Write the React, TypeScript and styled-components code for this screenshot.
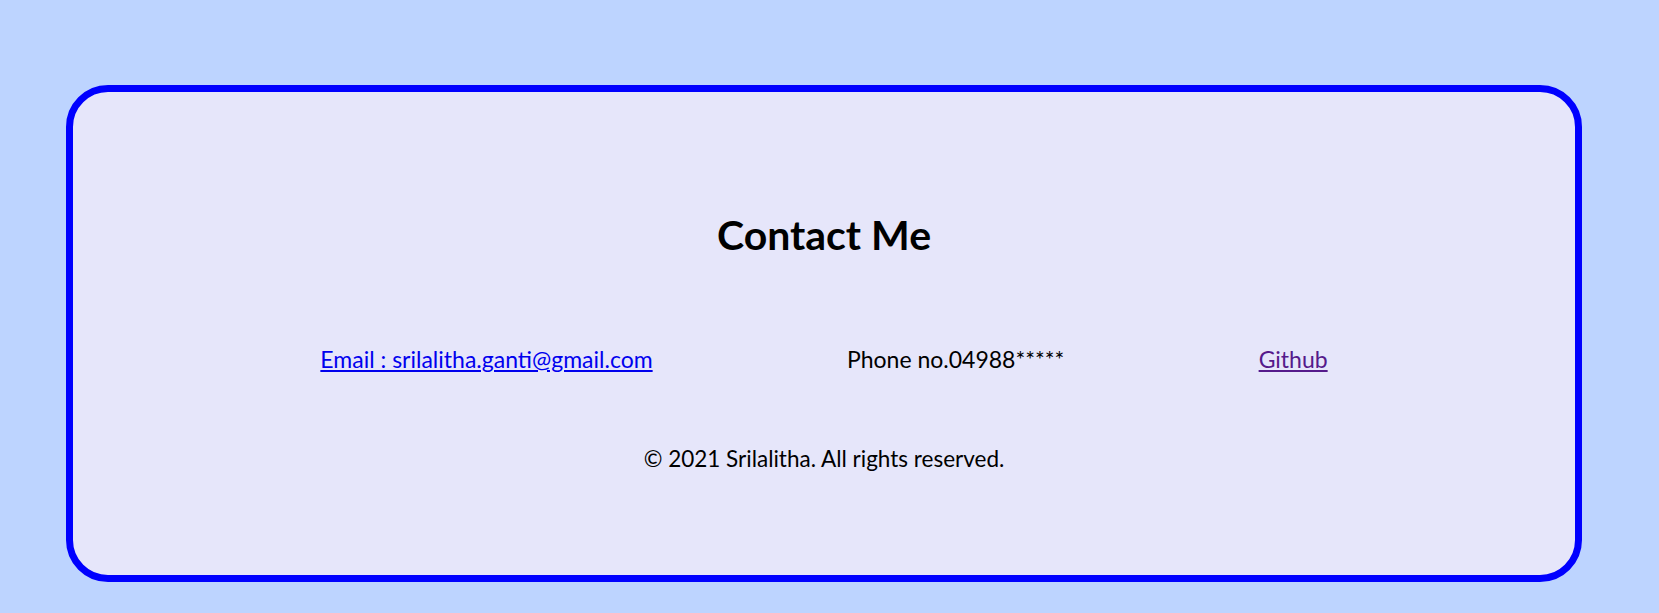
import React from "react";
import styled, { createGlobalStyle } from "styled-components";

const GlobalStyle = createGlobalStyle`
  html, body {
    margin: 0;
    padding: 0;
    background: #bdd4ff;
  }
  body {
    font-family: Lato, "Noto Sans", sans-serif;
    color: #000;
  }
`;

const Page = styled.div`
  padding: 85px 77px 32px 66px;
`;

const Card = styled.section`
  border: 7px solid #0000ff;
  border-radius: 42px;
  background: #e6e6fa;
  padding: 118px 0 104px;
  display: flex;
  flex-direction: column;
  align-items: center;
`;

const Heading = styled.h2`
  margin: 0;
  font-size: 41px;
  line-height: 1.2;
  font-weight: 700;
`;

const LinkRow = styled.div`
  width: 80%;
  margin-top: 87px;
  display: flex;
  justify-content: space-around;
  align-items: baseline;
  font-size: 23px;
  line-height: 1.15;
`;

const ContactLink = styled.a<{ $visited?: boolean }>`
  color: ${(p) => (p.$visited ? "#551a8b" : "#0000ee")};
  text-decoration: underline;
`;

const ContactText = styled.span`
  color: #000;
`;

const Copyright = styled.p`
  margin: 73px 0 0;
  font-size: 22.5px;
  line-height: 1.12;
`;

export default function App() {
  return (
    <>
      <GlobalStyle />
      <Page>
        <Card>
          <Heading>Contact Me</Heading>
          <LinkRow>
            <ContactLink href="#email">Email : srilalitha.ganti@gmail.com</ContactLink>
            <ContactText>Phone no.04988*****</ContactText>
            <ContactLink href="#github" $visited>
              Github
            </ContactLink>
          </LinkRow>
          <Copyright>© 2021 Srilalitha. All rights reserved.</Copyright>
        </Card>
      </Page>
    </>
  );
}
